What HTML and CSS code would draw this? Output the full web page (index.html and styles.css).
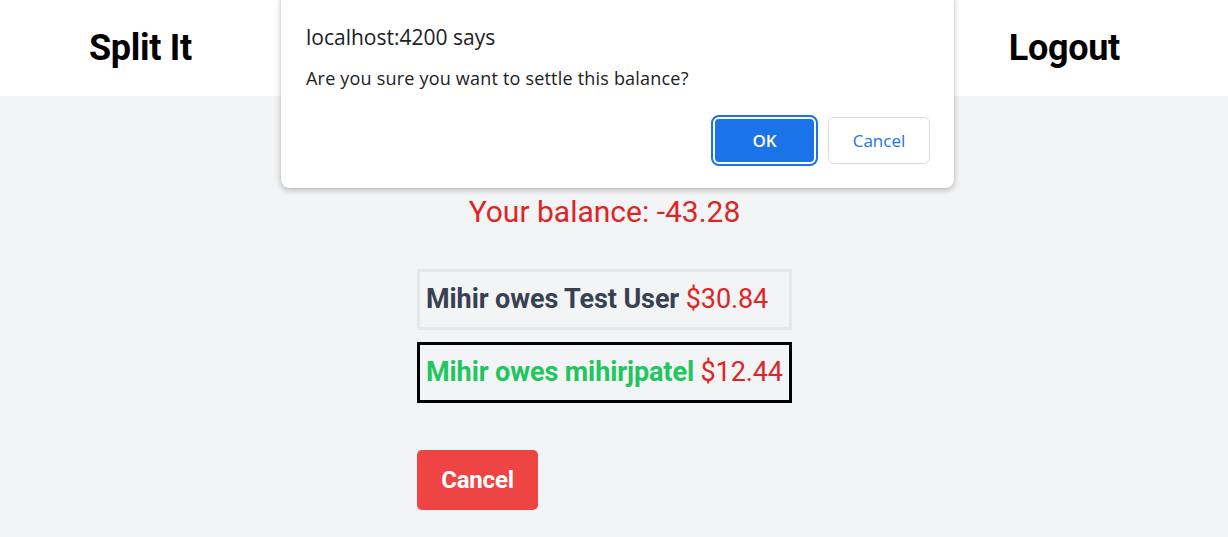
FILE: index.html
```html
<!DOCTYPE html>
<html>
<head>
<meta charset="utf-8">
<link rel="stylesheet" href="styles.css">
</head>
<body>
<header class="topbar">
  <div class="brand">Split It</div>
  <div class="logout">Logout</div>
</header>
<main class="content">
  <div class="column">
    <div class="balance">Your balance: -43.28</div>
    <div class="list">
      <div class="card"><span class="who">Mihir owes Test User</span> <span class="amt">$30.84</span></div>
      <div class="card selected"><span class="who green">Mihir owes mihirjpatel</span> <span class="amt">$12.44</span></div>
    </div>
    <button class="cancel-btn">Cancel</button>
  </div>
</main>
<div class="dialog">
  <div class="dlg-title">localhost:4200 says</div>
  <div class="dlg-msg">Are you sure you want to settle this balance?</div>
  <div class="dlg-actions">
    <button class="dlg-ok">OK</button>
    <button class="dlg-cancel">Cancel</button>
  </div>
</div>
</body>
</html>
```
FILE: styles.css
```css
* { box-sizing: border-box; }
html, body { margin: 0; padding: 0; }
body {
  font-family: Roboto, "Liberation Sans", sans-serif;
  background: #f3f4f6;
  height: 537px;
  overflow: hidden;
}
.topbar {
  height: 96px;
  background: #ffffff;
  display: flex;
  justify-content: space-between;
  align-items: center;
  padding: 0 108px 0 89px;
}
.brand, .logout {
  font-size: 36px;
  font-weight: 700;
  color: #000;
  letter-spacing: -0.3px;
}
.content {
  display: flex;
  justify-content: center;
  padding-right: 19px;
}
.column {
  display: flex;
  flex-direction: column;
  align-items: stretch;
  padding-top: 98px;
}
.balance {
  text-align: center;
  color: #dc2626;
  font-size: 30px;
  line-height: 36px;
}
.list {
  margin-top: 39px;
  display: flex;
  flex-direction: column;
  gap: 12px;
}
.card {
  border: 3px solid #e5e7eb;
  padding: 11px 6px;
  line-height: 33px;
  font-size: 27px;
  letter-spacing: -0.1px;
  white-space: nowrap;
}
.card.selected { border-color: #000; }
.who { font-weight: 700; color: #374151; }
.who.green { color: #22c55e; }
.amt { color: #dc2626; }
.cancel-btn {
  align-self: flex-start;
  margin-top: 47px;
  width: 121px;
  height: 60px;
  background: #ef4444;
  border: none;
  border-radius: 5px;
  color: #fff;
  font-family: Roboto, "Liberation Sans", sans-serif;
  font-weight: 700;
  font-size: 24px;
  letter-spacing: -0.2px;
}
.dialog {
  position: absolute;
  top: -8px;
  left: 281px;
  width: 673px;
  height: 196px;
  background: #fff;
  border-radius: 8px;
  box-shadow: 0 2px 6px rgba(0,0,0,0.25), 0 0 1px rgba(0,0,0,0.2);
  padding: 31px 24px 0 25px;
  font-family: "Open Sans", "Noto Sans", sans-serif;
  color: #202124;
}
.dlg-title {
  font-size: 21px;
  line-height: 28px;
}
.dlg-msg {
  margin-top: 15px;
  font-size: 18px;
  line-height: 24px;
  letter-spacing: 0.2px;
}
.dlg-actions {
  display: flex;
  justify-content: flex-end;
  gap: 12px;
  margin-top: 27px;
}
.dlg-ok {
  width: 103px;
  height: 47px;
  background: #1a73e8;
  color: #fff;
  border: 2px solid #fff;
  outline: 2px solid #1a73e8;
  border-radius: 6px;
  font-family: "Open Sans", "Noto Sans", sans-serif;
  font-size: 17px;
  font-weight: 600;
}
.dlg-cancel {
  width: 102px;
  height: 47px;
  background: #fff;
  color: #1a73e8;
  border: 1px solid #dadce0;
  border-radius: 6px;
  font-family: "Open Sans", "Noto Sans", sans-serif;
  font-size: 17px;
}
```
